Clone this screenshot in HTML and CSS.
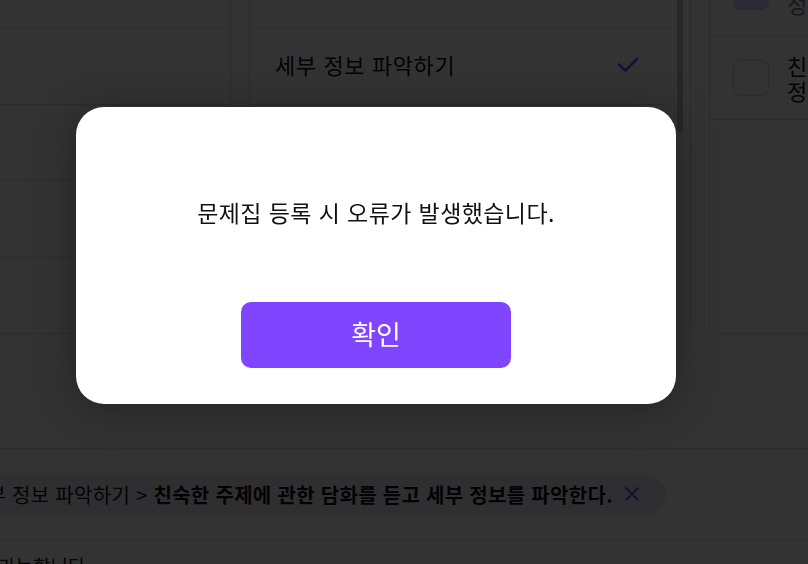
FILE: index.html
```html
<!DOCTYPE html>
<html lang="ko">
<head>
<meta charset="utf-8">
<title>문제집 등록</title>
<link rel="stylesheet" href="styles.css">
</head>
<body>
<div class="page">
  <div class="top">
    <div class="panel left">
      <div class="lrow first"></div>
      <div class="lrow"></div>
      <div class="lrow"></div>
      <div class="lrow"></div>
      <div class="lrow last"></div>
    </div>
    <div class="panel middle">
      <div class="mlist">
        <div class="mrow first"></div>
        <div class="mrow">
          <span class="mtext">세부 정보 파악하기</span>
          <svg class="check" width="22" height="16" viewBox="0 0 22 16"><polyline points="2,7.5 8.5,13.5 20,2" fill="none" stroke="#7f45ff" stroke-width="2.6" stroke-linecap="round" stroke-linejoin="round"/></svg>
        </div>
        <div class="mrow"><span class="mtext">세부 정보 파악하기</span></div>
      </div>
      <div class="scroll"><div class="thumb"></div></div>
    </div>
    <div class="panel right">
      <div class="rrow first">
        <span class="box on"></span>
        <span class="rtext">친숙한 주제에 관한 담화를 듣고 세부<br>정보를 파악한다.</span>
      </div>
      <div class="rrow">
        <span class="box"></span>
        <span class="rtext">친숙한 주제에 관한 담화를 듣고 세부<br>정보를 파악한다.</span>
      </div>
    </div>
  </div>
  <div class="chips">
    <div class="chip">
      <span class="crumb">듣기 &gt; 세부 정보 파악하기 &gt; </span><b class="goal">친숙한 주제에 관한 담화를 듣고 세부 정보를 파악한다.</b>
      <svg class="close" width="16" height="16" viewBox="0 0 16 16"><path d="M2 2 L14 14 M14 2 L2 14" stroke="#7f45ff" stroke-width="2" stroke-linecap="round"/></svg>
    </div>
  </div>
  <div class="note">가능합니다.</div>
</div>

<div class="overlay"></div>
<div class="modal" role="dialog">
  <p class="msg">문제집 등록 시 오류가 발생했습니다.</p>
  <button class="ok">확인</button>
</div>
</body>
</html>
```

FILE: styles.css
```css
* { box-sizing: border-box; }
html, body {
  margin: 0;
  padding: 0;
  width: 808px;
  height: 564px;
  overflow: hidden;
  background: #ffffff;
  font-family: "Noto Sans CJK KR", "Noto Sans", sans-serif;
  color: #111111;
}
.page {
  width: 808px;
}
.top {
  display: flex;
  align-items: stretch;
  height: 334px;
}
.panel {
  border: 1px solid #dddddd;
  border-top: none;
  flex-shrink: 0;
}
.left {
  width: 231px;
  border-left: none;
  display: flex;
  flex-direction: column;
}
.lrow {
  height: 77px;
  border-bottom: 1px solid #dddddd;
}
.lrow.first { height: 29px; }
.lrow.last { height: 76px; border-bottom: none; }
.middle {
  width: 442px;
  margin-left: 18px;
  border-radius: 0 0 10px 10px;
  display: flex;
}
.mlist {
  width: 420px;
  display: flex;
  flex-direction: column;
}
.mrow {
  height: 76px;
  border-bottom: 1px solid #dddddd;
  display: flex;
  align-items: center;
  justify-content: space-between;
  padding: 0 31px 5px 25px;
}
.mrow.first { height: 29px; }
.mtext {
  font-size: 22px;
  letter-spacing: 0.6px;
}
.check { display: block; margin-top: 2px; }
.scroll {
  flex: 1;
  padding: 0 7px 0 7px;
}
.thumb {
  width: 6px;
  height: 132px;
  background: #c4c4c4;
  border-radius: 0 0 3px 3px;
}
.right {
  width: 120px;
  margin-left: 18px;
  border-right: none;
  border-radius: 0 0 0 10px;
}
.rrow {
  height: 84px;
  border-bottom: 1px solid #dddddd;
  display: flex;
  align-items: center;
  padding-left: 23px;
  gap: 18px;
  white-space: nowrap;
  overflow: visible;
}
.rrow.first {
  height: 36px;
  align-items: flex-end;
}
.box {
  width: 36px;
  height: 36px;
  border: 1px solid #d4d4d4;
  border-radius: 7px;
  flex-shrink: 0;
  background: #ffffff;
}
.rrow.first .box {
  margin-bottom: 25px;
}
.box.on {
  background: #d8ccff;
  border-color: #d8ccff;
}
.rtext {
  font-size: 22px;
  line-height: 25px;
}
.rrow.first .rtext {
  margin-bottom: 19px;
  color: #777777;
}
.chips {
  margin-top: 114px;
  height: 92px;
  border-top: 1px solid #dddddd;
  border-bottom: 1px solid #dddddd;
  display: flex;
  align-items: center;
  justify-content: flex-end;
  padding-right: 142px;
}
.chip {
  flex-shrink: 0;
  white-space: nowrap;
  height: 41px;
  border-radius: 21px;
  background: #ebe8f8;
  display: flex;
  align-items: center;
  padding: 0 26px 0 20px;
  font-size: 20px;
}
.crumb { font-weight: 400; letter-spacing: 0.3px; }
.goal { font-weight: 700; margin-left: 6px; letter-spacing: 0.3px; }
.close { margin-left: 11px; display: block; }
.note {
  padding-top: 12px;
  font-size: 19px;
  margin-left: -2px;
}
.overlay {
  position: fixed;
  inset: 0;
  background: rgba(0, 0, 0, 0.8);
}
.modal {
  position: absolute;
  left: 76px;
  top: 107px;
  width: 600px;
  height: 297px;
  background: #ffffff;
  border-radius: 28px;
  box-shadow: 0 4px 40px rgba(0, 0, 0, 0.35);
  display: flex;
  flex-direction: column;
  align-items: center;
  padding-top: 90px;
}
.msg {
  margin: 0;
  font-size: 23px;
  line-height: 30px;
  letter-spacing: 0.4px;
  color: #111111;
}
.ok {
  margin-top: 75px;
  width: 270px;
  height: 66px;
  border: none;
  border-radius: 10px;
  background: #7f45ff;
  color: #ffffff;
  font-family: "Noto Sans CJK KR", "Noto Sans", sans-serif;
  font-size: 27px;
  padding: 0 0 3px;
  cursor: pointer;
}
```
